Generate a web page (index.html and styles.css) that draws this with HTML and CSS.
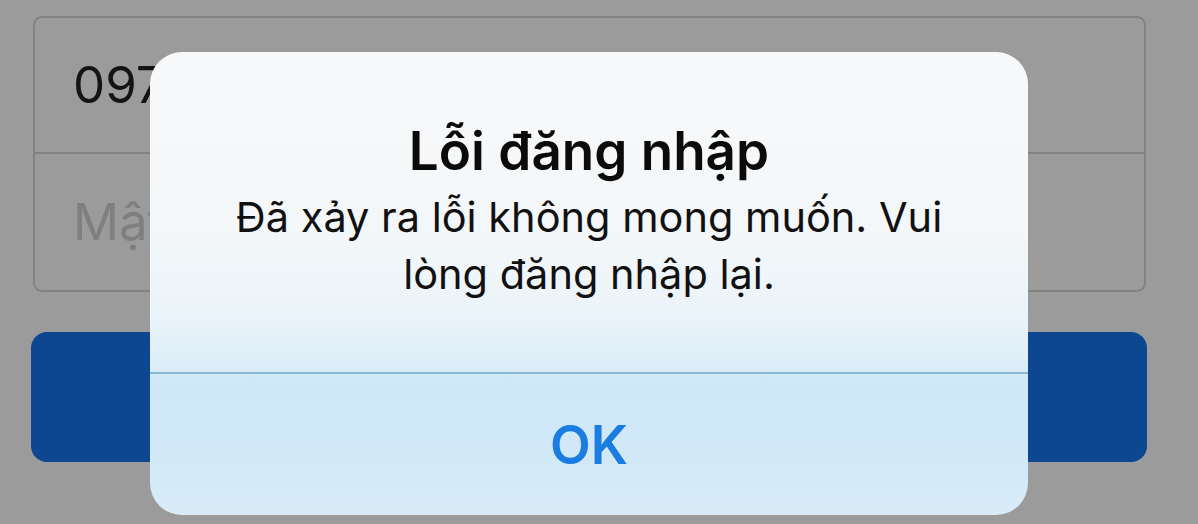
FILE: index.html
```html
<!DOCTYPE html>
<html lang="vi">
<head>
<meta charset="utf-8">
<title>Lỗi đăng nhập</title>
<link rel="stylesheet" href="styles.css">
</head>
<body>
<div class="screen">
  <form class="login">
    <div class="fields">
      <div class="field value">097</div>
      <div class="field placeholder">Mật khẩu</div>
    </div>
    <div class="submit"></div>
  </form>
  <div class="alert" role="alertdialog">
    <div class="alert-body">
      <h1 class="alert-title">Lỗi đăng nhập</h1>
      <p class="alert-msg">Đã xảy ra lỗi không mong muốn. Vui<br>lòng đăng nhập lại.</p>
    </div>
    <div class="alert-action">OK</div>
  </div>
</div>
</body>
</html>
```

FILE: styles.css
```css
html, body {
  margin: 0;
  padding: 0;
}
body {
  background: #9b9b9b;
  font-family: Inter, "Liberation Sans", sans-serif;
  width: 1198px;
  height: 524px;
  overflow: hidden;
}
.screen {
  position: relative;
  width: 1198px;
  height: 524px;
}
.login {
  padding: 16px 52px 0 31px;
  display: flex;
  flex-direction: column;
  gap: 40px;
}
.fields {
  margin-left: 2px;
  border: 2px solid #828282;
  border-radius: 9px;
  display: flex;
  flex-direction: column;
}
.field {
  height: 136px;
  box-sizing: border-box;
  padding-left: 38px;
  font-size: 51px;
  line-height: 134px;
  display: flex;
  align-items: center;
}
.field.value {
  color: #141414;
  border-bottom: 2px solid #838383;
}
.field.placeholder {
  color: #7f7f7f;
}
.submit {
  height: 130px;
  background: #0d4792;
  border-radius: 16px;
  margin-right: -1px;
}
.alert {
  position: absolute;
  left: 150px;
  top: 52px;
  width: 878px;
  height: 463px;
  border-radius: 32px;
  overflow: hidden;
  display: flex;
  flex-direction: column;
  background: linear-gradient(180deg, #f7f8f9 0%, #f4f7f9 38%, #ebf4f9 56%, #dcedf8 68%, #cfe8f7 70.5%, #d0e8f7 85%, #d9ecf8 100%);
}
.alert-body {
  height: 322px;
  box-sizing: border-box;
  padding-top: 69px;
  text-align: center;
  border-bottom: 2px solid #86b7cf;
}
.alert-title {
  margin: 0;
  font-size: 53px;
  line-height: 60px;
  font-weight: 600;
  color: #0b0b0b;
}
.alert-msg {
  margin: 8px 0 0;
  font-size: 41.5px;
  line-height: 57px;
  color: #111;
}
.alert-action {
  flex: 1;
  display: flex;
  align-items: center;
  justify-content: center;
  font-size: 53px;
  font-weight: 600;
  color: #1b7de2;
}
```
